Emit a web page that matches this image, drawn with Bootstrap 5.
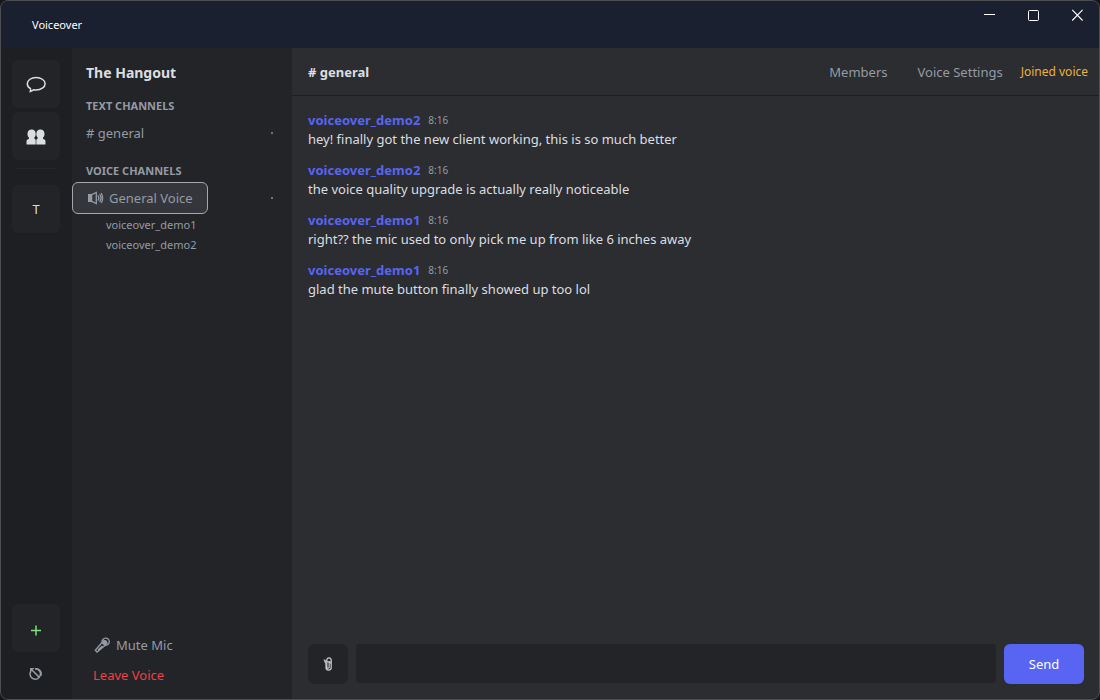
<!DOCTYPE html>
<html lang="en" data-bs-theme="dark">
<head>
<meta charset="utf-8">
<meta name="viewport" content="width=device-width, initial-scale=1">
<title>Voiceover</title>
<link href="https://cdn.jsdelivr.net/npm/bootstrap@5.3.0/dist/css/bootstrap.min.css" rel="stylesheet">
<style>
:root { --bs-border-radius: 4px; }
body { font-family: "Noto Sans", "Open Sans", sans-serif; font-size: 13px; line-height: 20px; color: #dbdee1; background: #151618; }
.btn { --bs-btn-font-size: 13px; --bs-btn-line-height: 20px; --bs-btn-border-width: 0; }
.app { height: 100vh; border: 1px solid #4c4e50; border-radius: 8px; background: #2b2d31; }
.app-body { min-height: 0; }
.titlebar { height: 47px; background: #1a2030; padding-left: 31px; color: #fff; font-size: 11px; }
.win-btn { width: 44px; height: 28px; padding: 0; color: #fff; }
.rail { width: 71px; background: #1e1f22; padding: 12px 12px 11px 11px; }
.tile { width: 48px; height: 48px; padding: 0; background: #232428; color: #dbdee1; }
.rail-rule { width: 40px; height: 1px; background: #25262a; }
.sidebar { width: 220px; background: #232428; }
.server-name { font-size: 14px; line-height: 20px; font-weight: 700; color: #dbdee1; padding: 15px 14px; margin: 0; }
.section-label { font-size: 11px; line-height: 16px; font-weight: 700; color: #949ba4; padding: 0 14px; margin: 0 0 3px; }
.chan-row + .section-label { margin-top: 14px; }
.chan { height: 32px; padding: 0 14px; color: #949ba4; text-align: left; }
.chan-active { background: #35363b; border: 1px solid #a6a7aa; }
.chan-row { padding-right: 19px; }
.dot { width: 2px; height: 2px; background: #70757d; }
.members { padding: 1px 0 0 34px; font-size: 11px; color: #949ba4; }
.voice-actions { padding: 0 21px 9px; }
.voice-actions .btn { height: 30px; padding: 0; color: #949ba4; }
.voice-actions .leave { color: #f23f43; }
.chat-head { height: 48px; border-bottom: 1px solid #1e1f22; padding: 0 11px 0 16px; }
.chat-title { font-size: 13px; line-height: 20px; font-weight: 700; color: #dbdee1; margin: 0; }
.chat-head .btn { color: #949ba4; padding: 0; }
.chat-head .open-members { margin-right: 30px; }
.chat-head .open-settings { margin-right: 18px; }
.voice-status { color: #f0b232; font-size: 12px; }
.feed { padding: 14px 16px; }
.author { color: #5865f2; font-weight: 700; }
.stamp { color: #949ba4; font-size: 10px; }
.said { line-height: 18px; margin: 0 0 12px; }
.composer { padding: 0 15px 15px 16px; }
.attach { width: 40px; height: 40px; padding: 0; background: #232428; }
.composer .form-control { height: 39px; font-size: 13px; background: #232428; border: 0; border-radius: 4px; color: #dbdee1; }
.send { width: 80px; height: 40px; padding: 0; }
.send, .send:hover { background: #5865f2; color: #fff; }
</style>
</head>
<body>
<div class="app d-flex flex-column overflow-hidden">
  <header class="titlebar d-flex justify-content-between align-items-center flex-shrink-0">
    <span>Voiceover</span>
    <div class="d-flex align-self-start">
      <button class="btn win-btn rounded-0" type="button" aria-label="Minimize"><svg class="d-block mx-auto" width="12" height="12" stroke="currentColor" fill="none"><path d="M1 5.500h11"/></svg></button>
      <button class="btn win-btn rounded-0" type="button" aria-label="Maximize"><svg class="d-block mx-auto" width="12" height="12" stroke="currentColor" fill="none"><rect x="1.500" y="1.500" width="10" height="10" rx="1"/></svg></button>
      <button class="btn win-btn rounded-0" type="button" aria-label="Close"><svg class="d-block mx-auto" width="12" height="12" stroke="currentColor" stroke-width="1.100" fill="none"><path d="M1.200.900l10.400 10.600M11.600.900L1.200 11.500"/></svg></button>
    </div>
  </header>
  <div class="app-body d-flex flex-grow-1">
    <nav class="rail d-flex flex-column align-items-center flex-shrink-0" aria-label="Servers">
      <button class="btn tile mb-1" type="button" aria-label="Messages"><svg class="d-block mx-auto" width="22" height="18" viewBox="-.5 -.5 22 18" fill="none" stroke="currentColor" stroke-width="1.500"><path d="M5 13.200C3 12 1.800 10.200 1.800 8.200c0-3.600 4-6.200 8.800-6.200s9 2.600 9 6.200-4.200 6.300-9 6.300c-1 0-1.800-.1-2.600-.3-1 .9-1.700 1.500-3.200 1.800.3-.9.400-1.800.2-2.800z"/></svg></button>
      <button class="btn tile mb-2" type="button" aria-label="Friends"><svg class="d-block mx-auto" width="20" height="20" viewBox="0 -3 20 20" fill="currentColor"><path d="M5.600.6C8.300.6 9.700 2.300 9.700 5c0 1.700-.7 3-1.500 3.700v.9c1 .4 1.500 1 1.500 2.300V15.600H.5v-3c0-1.600.9-2.200 2.500-2.600V8.700C2.100 8 1.500 6.700 1.500 5 1.500 2.300 2.900.6 5.600.6z"/><path d="M14.400.6c2.700 0 4.100 1.700 4.100 4.400 0 1.700-.6 3-1.500 3.700V10c1.600.4 2.500 1 2.500 2.600v3h-9.200v-3.700c0-1.300.5-1.900 1.500-2.300v-.9c-.8-.7-1.500-2-1.500-3.700 0-2.700 1.400-4.400 4.100-4.400z"/></svg></button>
      <div class="rail-rule mb-3"></div>
      <button class="btn tile" type="button">T</button>
      <button class="btn tile mt-auto" type="button" aria-label="Add server"><svg class="d-block mx-auto" width="12" height="16" stroke="#80e080" stroke-width="1.500" fill="none"><path d="M6 5.500v10M1 10.500h10"/></svg></button>
      <button class="btn p-0 mt-2 d-flex align-items-center justify-content-center" type="button" aria-label="Disconnect"><svg width="14" height="28" viewBox="0 0 14 28" stroke="#949ba4" stroke-width="1.500" fill="none"><path d="M2 11a5.200 5.200 0 1 0 4-2.200"/><path d="M6 8.800a5.200 5.200 0 0 1 5.800 7M3 10l7.600 7.600"/><path d="M1 8h4.500L1 12.500z" fill="#949ba4" stroke="none"/></svg></button>
    </nav>
    <aside class="sidebar d-flex flex-column flex-shrink-0">
      <h1 class="server-name">The Hangout</h1>
      <h2 class="section-label">TEXT CHANNELS</h2>
      <div class="chan-row d-flex align-items-center justify-content-between">
        <button class="btn chan" type="button"># general</button><span class="dot"></span>
      </div>
      <h2 class="section-label">VOICE CHANNELS</h2>
      <div class="chan-row d-flex align-items-center justify-content-between">
        <button class="btn chan chan-active d-flex align-items-center gap-1" type="button"><svg width="18" height="14" viewBox="0 0 18 14" fill="none" stroke="currentColor" stroke-width="1.300"><path d="M1 3h4v8H1z" fill="currentColor" stroke="none"/><path d="M4.600 3.600L9.300 1.500v11L4.600 10.400z"/><path d="M11 4.500c1 1.500 1 3.500 0 5M12.600 3c1.600 2.300 1.600 5.700 0 8M14.200 2c1.900 2.800 1.900 7.200 0 10"/></svg><span>General Voice</span></button><span class="dot"></span>
      </div>
      <ul class="members list-unstyled mb-0">
        <li>voiceover_demo1</li>
        <li>voiceover_demo2</li>
      </ul>
      <div class="voice-actions d-flex flex-column align-items-start mt-auto">
        <button class="btn d-flex align-items-center gap-1" type="button"><svg width="19" height="18" viewBox="0 0 19 18" fill="none" stroke="currentColor" stroke-width="1.300"><path d="M9 6.500L2.300 14.200 4 16l8-6.500M5 14l4.500-4"/><path d="M9 6.500c-.3-2.200 1.300-4.300 3.700-4.300 2 0 3.600 1.600 3.600 3.600 0 2.300-2.200 3.900-4.500 3.600z"/><path d="M10 4.500c2.500-1.500 5 .5 4.500 3.500L12 9.200 9 6.500z" fill="currentColor" stroke="none"/></svg><span>Mute Mic</span></button>
        <button class="btn leave" type="button">Leave Voice</button>
      </div>
    </aside>
    <main class="d-flex flex-column flex-grow-1">
      <div class="chat-head d-flex align-items-center">
        <h2 class="chat-title me-auto"># general</h2>
        <button class="btn open-members" type="button">Members</button>
        <button class="btn open-settings" type="button">Voice Settings</button>
        <span class="voice-status">Joined voice</span>
      </div>
      <section class="feed flex-grow-1 overflow-auto" aria-label="Messages">
        <article><div class="d-flex gap-2"><span class="author">voiceover_demo2</span><span class="stamp">8:16</span></div><p class="said">hey! finally got the new client working, this is so much better</p></article>
        <article><div class="d-flex gap-2"><span class="author">voiceover_demo2</span><span class="stamp">8:16</span></div><p class="said">the voice quality upgrade is actually really noticeable</p></article>
        <article><div class="d-flex gap-2"><span class="author">voiceover_demo1</span><span class="stamp">8:16</span></div><p class="said">right?? the mic used to only pick me up from like 6 inches away</p></article>
        <article><div class="d-flex gap-2"><span class="author">voiceover_demo1</span><span class="stamp">8:16</span></div><p class="said">glad the mute button finally showed up too lol</p></article>
      </section>
      <form class="composer d-flex gap-2">
        <button class="btn attach flex-shrink-0" type="button" aria-label="Attach file"><svg class="d-block mx-auto" width="12" height="16" viewBox="-.5 0 12 16" fill="none" stroke="#c8cacd" stroke-width="1.200"><path d="M3.500 7v4.500a2.600 2.600 0 0 0 5.200 0V4a2.200 2.200 0 0 0-4.400 0v7a1 1 0 0 0 2.400 0V5"/><path d="M1.500 3.500l2.500 5M1.800 5.800h7.500M1.800 4l7 3.500" stroke="#b4b6b9"/></svg></button>
        <input class="form-control" type="text" aria-label="Message">
        <button class="btn send flex-shrink-0" type="button">Send</button>
      </form>
    </main>
  </div>
</div>
<script src="https://cdn.jsdelivr.net/npm/bootstrap@5.3.0/dist/js/bootstrap.bundle.min.js"></script>
</body>
</html>
